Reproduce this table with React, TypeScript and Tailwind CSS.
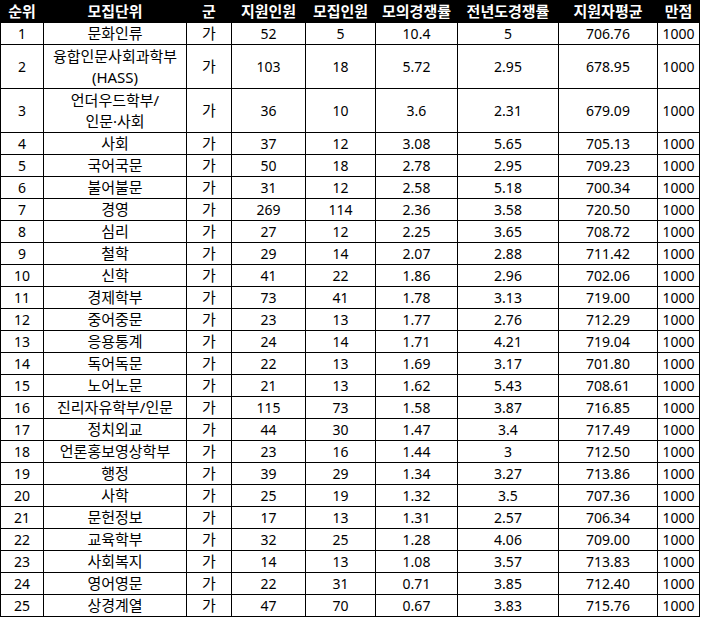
import React from "react";

type Row = [string, string, string, string, string, string, string, string, string];

const rows: Row[] = [
  ["1", "문화인류", "가", "52", "5", "10.4", "5", "706.76", "1000"],
  ["2", "융합인문사회과학부\n(HASS)", "가", "103", "18", "5.72", "2.95", "678.95", "1000"],
  ["3", "언더우드학부/\n인문·사회", "가", "36", "10", "3.6", "2.31", "679.09", "1000"],
  ["4", "사회", "가", "37", "12", "3.08", "5.65", "705.13", "1000"],
  ["5", "국어국문", "가", "50", "18", "2.78", "2.95", "709.23", "1000"],
  ["6", "불어불문", "가", "31", "12", "2.58", "5.18", "700.34", "1000"],
  ["7", "경영", "가", "269", "114", "2.36", "3.58", "720.50", "1000"],
  ["8", "심리", "가", "27", "12", "2.25", "3.65", "708.72", "1000"],
  ["9", "철학", "가", "29", "14", "2.07", "2.88", "711.42", "1000"],
  ["10", "신학", "가", "41", "22", "1.86", "2.96", "702.06", "1000"],
  ["11", "경제학부", "가", "73", "41", "1.78", "3.13", "719.00", "1000"],
  ["12", "중어중문", "가", "23", "13", "1.77", "2.76", "712.29", "1000"],
  ["13", "응용통계", "가", "24", "14", "1.71", "4.21", "719.04", "1000"],
  ["14", "독어독문", "가", "22", "13", "1.69", "3.17", "701.80", "1000"],
  ["15", "노어노문", "가", "21", "13", "1.62", "5.43", "708.61", "1000"],
  ["16", "진리자유학부/인문", "가", "115", "73", "1.58", "3.87", "716.85", "1000"],
  ["17", "정치외교", "가", "44", "30", "1.47", "3.4", "717.49", "1000"],
  ["18", "언론홍보영상학부", "가", "23", "16", "1.44", "3", "712.50", "1000"],
  ["19", "행정", "가", "39", "29", "1.34", "3.27", "713.86", "1000"],
  ["20", "사학", "가", "25", "19", "1.32", "3.5", "707.36", "1000"],
  ["21", "문헌정보", "가", "17", "13", "1.31", "2.57", "706.34", "1000"],
  ["22", "교육학부", "가", "32", "25", "1.28", "4.06", "709.00", "1000"],
  ["23", "사회복지", "가", "14", "13", "1.08", "3.57", "713.83", "1000"],
  ["24", "영어영문", "가", "22", "31", "0.71", "3.85", "712.40", "1000"],
  ["25", "상경계열", "가", "47", "70", "0.67", "3.83", "715.76", "1000"],
];

const headers = ["순위", "모집단위", "군", "지원인원", "모집인원", "모의경쟁률", "전년도경쟁률", "지원자평균", "만점"];

export default function App() {
  return (
    <div
      className="bg-white w-[704px] h-[617px] text-black"
      style={{ fontFamily: '"Noto Sans", "Noto Sans CJK KR", sans-serif' }}
    >
      <table className="table-fixed border-collapse w-[699px] text-[14px] leading-[21px]">
        <colgroup>
          <col className="w-[43px]" />
          <col className="w-[143px]" />
          <col className="w-[45px]" />
          <col className="w-[74px]" />
          <col className="w-[70px]" />
          <col className="w-[82px]" />
          <col className="w-[101px]" />
          <col className="w-[99px]" />
          <col className="w-[42px]" />
        </colgroup>
        <thead>
          <tr className="h-[21px] bg-black">
            {headers.map((h) => (
              <th key={h} className="border border-black p-0 text-center font-bold text-white whitespace-nowrap text-[15px]">
                {h}
              </th>
            ))}
          </tr>
        </thead>
        <tbody>
          {rows.map((r) => {
            const tall = r[1].includes("\n");
            return (
              <tr key={r[0]} className={tall ? "h-[44px]" : "h-[22px]"}>
                {r.map((c, i) => (
                  <td
                    key={i}
                    className={`border border-black p-0 text-center align-middle whitespace-pre-line ${i === 1 || i === 2 ? "text-[15px]" : ""}`}
                  >
                    {c}
                  </td>
                ))}
              </tr>
            );
          })}
        </tbody>
      </table>
    </div>
  );
}
